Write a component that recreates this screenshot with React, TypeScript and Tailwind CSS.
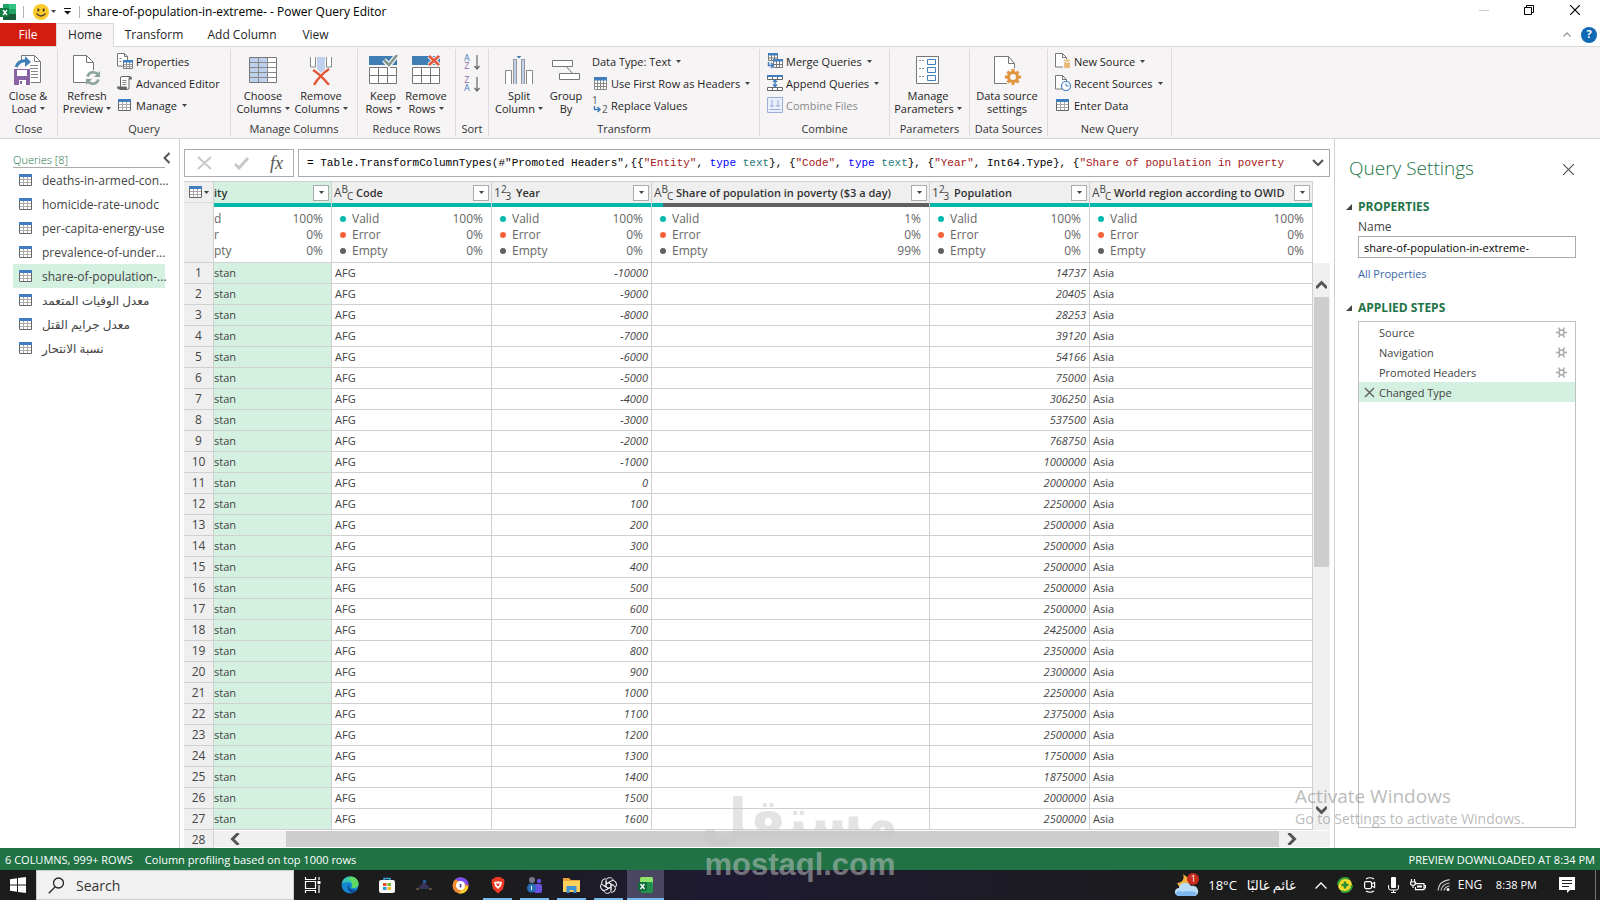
import type { ReactNode } from "react";

type ColumnType = "text" | "number";

type Column = {
  id: string;
  title: string;
  type: ColumnType;
  width: string;
  valid: number;
  empty: number;
  scrolled?: boolean;
};

// The first column is scrolled half out of view, so it only shows the tail of its texts.
const COLUMNS: Column[] = [
  { id: "entity", title: "ity", type: "text", width: "w-[118px]", valid: 100, empty: 0, scrolled: true },
  { id: "code", title: "Code", type: "text", width: "w-40", valid: 100, empty: 0 },
  { id: "year", title: "Year", type: "number", width: "w-40", valid: 100, empty: 0 },
  { id: "share", title: "Share of population in poverty ($3 a day)", type: "text", width: "w-[278px]", valid: 1, empty: 99 },
  { id: "population", title: "Population", type: "number", width: "w-40", valid: 100, empty: 0 },
  { id: "region", title: "World region according to OWID", type: "text", width: "", valid: 100, empty: 0 },
];

const ROWS: Array<[number, number]> = [
  [-10000, 14737],
  [-9000, 20405],
  [-8000, 28253],
  [-7000, 39120],
  [-6000, 54166],
  [-5000, 75000],
  [-4000, 306250],
  [-3000, 537500],
  [-2000, 768750],
  [-1000, 1000000],
  [0, 2000000],
  [100, 2250000],
  [200, 2500000],
  [300, 2500000],
  [400, 2500000],
  [500, 2500000],
  [600, 2500000],
  [700, 2425000],
  [800, 2350000],
  [900, 2300000],
  [1000, 2250000],
  [1100, 2375000],
  [1200, 2500000],
  [1300, 1750000],
  [1400, 1875000],
  [1500, 2000000],
  [1600, 2500000],
];

const QUERIES = [
  "deaths-in-armed-con...",
  "homicide-rate-unodc",
  "per-capita-energy-use",
  "prevalence-of-under...",
  "share-of-population-...",
  "معدل الوفيات المتعمد",
  "معدل جرايم القتل",
  "نسبة الانتحار",
];

const STEPS = ["Source", "Navigation", "Promoted Headers", "Changed Type"];

const UI_FONT = "font-['Open_Sans','Noto_Sans','DejaVu_Sans',sans-serif]";
const CELL = "h-[21px] border-b border-r border-[#d0d0d0] px-[3px] pb-[2px] pt-0";

export default function App() {
  return (
    <div className={`relative flex h-screen w-full flex-col overflow-hidden bg-white text-[11px] leading-[13px] text-[#1e1e1e] ${UI_FONT}`}>
      <TitleBar />
      <Tabs />
      <Ribbon />
      <main className="flex min-h-0 flex-1">
        <QueriesPane />
        <section className="flex min-w-0 flex-1 flex-col pl-1 pr-1 pt-2.5">
          <FormulaBar />
          <DataGrid />
        </section>
        <SettingsPane />
      </main>
      <footer className="flex h-[22px] shrink-0 items-center bg-[#217346] px-[5px] text-white">
        <span>6 COLUMNS, 999+ ROWS</span>
        <span className="ml-3">Column profiling based on top 1000 rows</span>
        <span className="ml-auto">PREVIEW DOWNLOADED AT 8:34 PM</span>
      </footer>
      <Taskbar />
      <Watermarks />
    </div>
  );
}

function TitleBar() {
  return (
    <header className="flex h-[23px] shrink-0 items-center text-xs text-black">
      <ExcelLogo />
      <span className="ml-[7px] h-3 w-px bg-[#b5b5b5]" />
      <button type="button" aria-label="Send a smile" className="ml-[9px] flex items-center gap-[2px]">
        <svg width="16" height="16" viewBox="0 0 16 16">
          <circle cx="8" cy="8" r="8" fill="#fcc92b" />
          <ellipse cx="5.3" cy="6" rx="1.1" ry="1.7" fill="#4b4130" />
          <ellipse cx="10.7" cy="6" rx="1.1" ry="1.7" fill="#4b4130" />
          <path d="M3.5 9.5q4.500 5 9 0" fill="none" stroke="#4b4130" strokeWidth="1.300" />
        </svg>
        <Caret />
      </button>
      <button type="button" aria-label="Customize toolbar" className="ml-2">
        <svg width="7" height="7" viewBox="0 0 7 7">
          <path d="M0 .5h7" stroke="#111" />
          <path d="M0 3h7L3.500 6.500z" fill="#111" />
        </svg>
      </button>
      <span className="ml-2 h-3 w-px bg-[#b5b5b5]" />
      <h1 className="ml-[7px]">share-of-population-in-extreme- - Power Query Editor</h1>
      <div className="ml-auto flex items-center pb-[3px] pr-5">
        <button type="button" aria-label="Minimize" className="mr-[35px]">
          <svg width="10" height="10"><path d="M0 5.500h10" stroke="#ccc" /></svg>
        </button>
        <button type="button" aria-label="Restore" className="mr-9">
          <svg width="10" height="10" fill="none" stroke="#000"><path d="M.5 2.500h7v7h-7zM2.500 2.500v-2h7v7h-2" /></svg>
        </button>
        <button type="button" aria-label="Close">
          <svg width="10" height="10" stroke="#000" strokeWidth="1.200"><path d="M0 0l10 10M10 0L0 10" /></svg>
        </button>
      </div>
    </header>
  );
}

function Tabs() {
  return (
    <nav className="flex h-6 shrink-0 border-b border-[#d9d7d8] text-xs text-[#262626]">
      <button type="button" className="w-14 bg-[#d21e10] text-white">File</button>
      <button type="button" className="-mb-px w-[58px] border border-b-0 border-[#d9d7d8] bg-[#f6f4f5] pb-[2px]">Home</button>
      <button type="button" className="w-20">Transform</button>
      <button type="button" className="w-24">Add Column</button>
      <button type="button" className="w-[51px]">View</button>
      <div className="ml-auto flex items-center gap-[10px] pr-[3px]">
        <button type="button" aria-label="Collapse ribbon">
          <svg width="8" height="5" fill="none" stroke="#999" strokeWidth="1.300"><path d="M.5 4.500L4 1l3.500 3.500" /></svg>
        </button>
        <button type="button" aria-label="Help" className="flex size-4 items-center justify-center rounded-full bg-[#0f69b4] text-[11px] font-bold text-white">?</button>
      </div>
    </nav>
  );
}

function Ribbon() {
  return (
    <div className="flex h-[92px] shrink-0 overflow-hidden border-b border-[#d5d3d4] bg-[#f6f4f5] py-[2px]">
      <Group label="Close" className="w-[58px]">
        <BigButton icon={<CloseLoadIcon />} lines={["Close &", "Load"]} caret className="w-14" />
      </Group>
      <Group label="Query" className="w-[173px]">
        <BigButton icon={<RefreshIcon />} lines={["Refresh", "Preview"]} caret className="w-[58px]" />
        <SmallButtons className="pl-px">
          <SmallButton icon={<PropertiesIcon />}>Properties</SmallButton>
          <SmallButton icon={<ScrollIcon />}>Advanced Editor</SmallButton>
          <SmallButton icon={<TableIcon />} caret>Manage</SmallButton>
        </SmallButtons>
      </Group>
      <Group label="Manage Columns" className="w-[127px]">
        <BigButton icon={<ChooseColumnsIcon />} lines={["Choose", "Columns"]} caret className="ml-[3px] w-[58px]" />
        <BigButton icon={<RemoveColumnsIcon />} lines={["Remove", "Columns"]} caret className="w-[58px]" />
      </Group>
      <Group label="Reduce Rows" className="w-[98px]">
        <BigButton icon={<RowsIcon remove={false} />} lines={["Keep", "Rows"]} caret className="ml-[3px] w-11" />
        <BigButton icon={<RowsIcon remove />} lines={["Remove", "Rows"]} caret className="w-[42px]" />
      </Group>
      <Group label="Sort" className="w-[33px]">
        <div className="flex flex-col gap-[6px] pl-2 pt-[5px]">
          <SortButton top="A" bottom="Z" label="Sort ascending" />
          <SortButton top="Z" bottom="A" label="Sort descending" />
        </div>
      </Group>
      <Group label="Transform" className="w-[271px]">
        <BigButton icon={<SplitIcon />} lines={["Split", "Column"]} caret className="ml-[3px] w-[54px]" />
        <BigButton icon={<GroupByIcon />} lines={["Group", "By"]} className="w-10" />
        <SmallButtons className="pl-[6px]">
          <SmallButton caret>Data Type: Text</SmallButton>
          <SmallButton icon={<HeaderRowIcon />} caret>Use First Row as Headers</SmallButton>
          <SmallButton icon={<ReplaceIcon />}>Replace Values</SmallButton>
        </SmallButtons>
      </Group>
      <Group label="Combine" className="w-[130px]">
        <SmallButtons className="pl-[7px]">
          <SmallButton icon={<MergeIcon />} caret>Merge Queries</SmallButton>
          <SmallButton icon={<AppendIcon />} caret>Append Queries</SmallButton>
          <SmallButton icon={<CombineIcon />} disabled>Combine Files</SmallButton>
        </SmallButtons>
      </Group>
      <Group label="Parameters" className="w-20">
        <BigButton icon={<ParametersIcon />} lines={["Manage", "Parameters"]} caret className="w-[76px]" />
      </Group>
      <Group label="Data Sources" className="w-[78px]">
        <BigButton icon={<SourceSettingsIcon />} lines={["Data source", "settings"]} className="w-[74px]" />
      </Group>
      <Group label="New Query" className="w-[124px]">
        <SmallButtons className="pl-[7px]">
          <SmallButton icon={<PageIcon badge="data" />} caret>New Source</SmallButton>
          <SmallButton icon={<PageIcon badge="clock" />} caret>Recent Sources</SmallButton>
          <SmallButton icon={<TableIcon />}>Enter Data</SmallButton>
        </SmallButtons>
      </Group>
    </div>
  );
}

function Group({ label, className, children }: { label: string; className: string; children: ReactNode }) {
  return (
    <div className={`flex shrink-0 flex-col border-r border-[#dddbdc] ${className}`}>
      <div className="flex flex-1">{children}</div>
      <div className="whitespace-nowrap pb-px text-center text-[#333]">{label}</div>
    </div>
  );
}

function BigButton({ icon, lines, caret, className }: { icon: ReactNode; lines: [string, string]; caret?: boolean; className: string }) {
  return (
    <button type="button" className={`flex shrink-0 flex-col items-center pt-[6px] ${className}`}>
      {icon}
      <span className="mt-1 whitespace-nowrap">{lines[0]}</span>
      <span className="flex items-center gap-[3px] whitespace-nowrap">{lines[1]}{caret && <Caret />}</span>
    </button>
  );
}

function SmallButtons({ className, children }: { className: string; children: ReactNode }) {
  return <div className={`flex flex-col items-start pt-px ${className}`}>{children}</div>;
}

function SmallButton({ icon, caret, disabled, children }: { icon?: ReactNode; caret?: boolean; disabled?: boolean; children: ReactNode }) {
  return (
    <button type="button" disabled={disabled} className="flex h-[22px] items-center whitespace-nowrap disabled:text-[#8a8a8a]">
      {icon && <span className="mr-[3px] flex w-4 justify-center">{icon}</span>}
      {children}
      {caret && <span className="ml-[5px]"><Caret /></span>}
    </button>
  );
}

function SortButton({ top, bottom, label }: { top: string; bottom: string; label: string }) {
  const tone = (letter: string) => (letter === "A" ? "text-[#3f7fbf]" : "text-[#8f6aa8]");
  return (
    <button type="button" aria-label={label} className="flex items-center gap-1 text-[9px] leading-2">
      <span className="flex flex-col"><span className={tone(top)}>{top}</span><span className={tone(bottom)}>{bottom}</span></span>
      <svg width="6" height="15" fill="none" stroke="#666" strokeWidth="1.200"><path d="M3 0v14M.5 11L3 14l2.500-3" /></svg>
    </button>
  );
}

function QueriesPane() {
  return (
    <aside className="w-[180px] shrink-0 border-r border-[#d0d0d0] pl-[13px] pt-[13px] text-[#444]">
      <div className="flex h-4 w-[152px] items-center justify-between border-b border-[#ababab]">
        <h2 className="font-light text-[#217346]">Queries [8]</h2>
        <button type="button" aria-label="Collapse queries" className="-mr-[5px] pb-1">
          <svg width="7" height="12" fill="none" stroke="#555" strokeWidth="2"><path d="M6.500 1L1.500 6l5 5" /></svg>
        </button>
      </div>
      <ul className="w-[152px] text-xs">
        {QUERIES.map((q, i) => (
          <li key={q} className={i === 4 ? "bg-[#d3f0e0]" : ""}>
            <button type="button" className="flex h-6 w-full items-center whitespace-nowrap pl-[6px]">
              <TableIcon />
              <span className="ml-[9px] pt-[2px]">{q}</span>
            </button>
          </li>
        ))}
      </ul>
    </aside>
  );
}

function FormulaBar() {
  const str = "text-[#a31515]";
  return (
    <div className="flex h-7 shrink-0 gap-1">
      <div className="flex w-[110px] shrink-0 items-center gap-[21px] border border-[#ababab] pl-3">
        <button type="button" aria-label="Cancel">
          <svg width="16" height="14" stroke="#c8c8c8" strokeWidth="2"><path d="M1 1l13 12M14 1L1 13" /></svg>
        </button>
        <button type="button" aria-label="Accept">
          <svg width="15" height="13" fill="none" stroke="#c8c8c8" strokeWidth="3"><path d="M1 7l4 4 9-10" /></svg>
        </button>
        <button type="button" className="font-['Liberation_Serif',serif] text-[18px] italic text-[#555]">fx</button>
      </div>
      <div className="flex min-w-0 flex-1 items-center border border-[#ababab] pl-2 pr-[5px] text-black">
        <code className="min-w-0 flex-1 overflow-hidden whitespace-pre font-['Liberation_Mono',monospace]">
          {'= Table.TransformColumnTypes(#"Promoted Headers",{{'}<span className={str}>"Entity"</span>, <TypeText />{"}, {"}
          <span className={str}>"Code"</span>, <TypeText />{"}, {"}<span className={str}>"Year"</span>
          {", Int64.Type}, {"}<span className={str}>"Share of population in poverty</span>
        </code>
        <button type="button" aria-label="Expand formula bar">
          <svg width="12" height="8" fill="none" stroke="#555" strokeWidth="2"><path d="M1 1l5 5 5-5" /></svg>
        </button>
      </div>
    </div>
  );
}

function TypeText() {
  return <><span className="text-[#0000ff]">type</span> <span className="text-[#257a7a]">text</span></>;
}

function DataGrid() {
  return (
    <div className="mt-1 flex min-h-0 flex-1 flex-col">
      <div className="flex min-h-0 flex-1 overflow-hidden">
        <div className="min-w-0 flex-1 overflow-hidden">
          <table className="w-full table-fixed border-separate border-spacing-0 text-[#444]">
            <colgroup>
              <col className="w-[30px]" />
              {COLUMNS.map((c) => <col key={c.id} className={c.width} />)}
            </colgroup>
            <thead>
              <tr>
                <th className="h-[82px] border-b border-r border-t border-[#d0d0d0] bg-[#efefef] p-0 align-top">
                  <button type="button" aria-label="Table options" className="flex h-[21px] w-full items-center gap-px border-b border-[#ddd] pl-[5px]">
                    <TableIcon />
                    <Caret />
                  </button>
                </th>
                {COLUMNS.map((c) => <HeaderCell key={c.id} column={c} />)}
              </tr>
            </thead>
            <tbody>
              {ROWS.map(([year, population], i) => (
                <tr key={year}>
                  <th scope="row" className="h-[21px] border-b border-r border-[#d0d0d0] bg-[#efefef] p-0 text-center text-xs leading-4 font-normal">{i + 1}</th>
                  <td className="h-[21px] border-b border-r border-[#d0d0d0] bg-[#d3f0e0] px-0 pb-[2px] pt-0">stan</td>
                  <td className={CELL}>AFG</td>
                  <td className={`${CELL} text-right italic`}>{year}</td>
                  <td className={CELL} />
                  <td className={`${CELL} text-right italic`}>{population}</td>
                  <td className={CELL}>Asia</td>
                </tr>
              ))}
            </tbody>
          </table>
        </div>
        <div className="mt-[82px] flex w-[17px] shrink-0 flex-col items-center bg-[#f0f0f0] pb-[15px] pt-[17px]">
          <svg width="11" height="10" fill="none" stroke="#555" strokeWidth="3"><path d="M0 8l5.500-5.500L11 8" /></svg>
          <div className="mt-[7px] h-[270px] w-[15px] bg-[#cdcdcd]" />
          <svg className="mt-auto" width="11" height="10" fill="none" stroke="#555" strokeWidth="3"><path d="M0 2l5.500 5.500L11 2" /></svg>
        </div>
      </div>
      <div className="flex h-[18px] shrink-0 overflow-hidden">
        <div className="w-[30px] shrink-0 border-r border-[#d0d0d0] bg-[#efefef] pt-[2px] text-center text-xs leading-4 text-[#444]">28</div>
        <div className="flex flex-1 items-center border-y border-white bg-[#f0f0f0] pl-4">
          <svg width="10" height="12" fill="none" stroke="#555" strokeWidth="3"><path d="M8.500 0L2.500 6l6 6" /></svg>
          <div className="ml-[46px] h-full flex-1 bg-[#cdcdcd]" />
          <svg className="ml-2 mr-[33px]" width="10" height="12" fill="none" stroke="#555" strokeWidth="3"><path d="M1.500 0l6 6-6 6" /></svg>
        </div>
      </div>
    </div>
  );
}

function HeaderCell({ column }: { column: Column }) {
  const { scrolled, type, title, valid, empty } = column;
  return (
    <th className="h-[82px] overflow-hidden border-b border-r border-t border-[#d0d0d0] p-0 text-left align-top font-normal">
      <div className={`flex h-[21px] items-center ${scrolled ? "bg-[#d3f0e0]" : "bg-[#efefef]"}`}>
        {!scrolled && <TypeIcon type={type} />}
        <span className={`whitespace-nowrap pb-px font-semibold text-[#333] ${scrolled ? "" : "ml-[5px]"}`}>{title}</span>
        <button type="button" aria-label={`Filter ${title}`} className="ml-auto mr-[2px] flex size-4 shrink-0 items-center justify-center border border-[#ababab] bg-white">
          <Caret />
        </button>
      </div>
      <div className="flex h-1">
        <div className="bg-[#01b8aa]" style={{ width: valid === 100 ? "100%" : "11px" }} />
        <div className="flex-1 bg-[#5f6062]" />
      </div>
      <dl className={`flex h-[55px] flex-col justify-center pr-2 text-[#666] ${scrolled ? "" : "pl-2"}`}>
        <Stat color="bg-[#01b8aa]" name={scrolled ? "d" : "Valid"} value={valid} dot={!scrolled} />
        <Stat color="bg-[#f4623a]" name={scrolled ? "r" : "Error"} value={0} dot={!scrolled} />
        <Stat color="bg-[#5f6062]" name={scrolled ? "pty" : "Empty"} value={empty} dot={!scrolled} />
      </dl>
    </th>
  );
}

function Stat({ color, name, value, dot }: { color: string; name: string; value: number; dot: boolean }) {
  return (
    <div className="flex h-4 items-center text-xs">
      {dot && <span className={`mr-[6px] size-[6px] rounded-full ${color}`} />}
      <dt>{name}</dt>
      <dd className="ml-auto">{value}%</dd>
    </div>
  );
}

function TypeIcon({ type }: { type: ColumnType }) {
  const [a, b, c] = type === "text" ? ["A", "B", "C"] : ["1", "2", "3"];
  return (
    <span aria-hidden="true" className="flex w-[19px] shrink-0 items-center pl-[2px] leading-3 text-[#444]">
      <span className="text-[12px]">{a}</span>
      <span className="pb-2 text-[10px]">{b}</span>
      <span className="-ml-px pt-[6px] text-[10px]">{c}</span>
    </span>
  );
}

function SettingsPane() {
  return (
    <aside className="flex w-[266px] shrink-0 flex-col border-l border-[#d0d0d0] pb-5 pl-[11px] pr-6 text-xs leading-4 text-[#444]">
      <div className="mt-4 flex h-7 items-center justify-between pl-[3px]">
        <h2 className="pb-[2px] text-[19px] font-light leading-[26px] text-[#217346]">Query Settings</h2>
        <button type="button" aria-label="Close settings" className="mr-[2px]">
          <svg width="11" height="11" stroke="#555" strokeWidth="1.200"><path d="M0 0l11 11M11 0L0 11" /></svg>
        </button>
      </div>
      <SectionTitle className="mt-4">PROPERTIES</SectionTitle>
      <label htmlFor="query-name" className="ml-3 mt-1">Name</label>
      <input id="query-name" defaultValue="share-of-population-in-extreme-" className="ml-3 mt-px h-[22px] border border-[#ababab] px-[5px] text-[11px] text-black" />
      <a href="#properties" className="ml-3 mt-2 self-start text-[11px] text-[#3b6aa8]">All Properties</a>
      <SectionTitle className="mt-[18px]">APPLIED STEPS</SectionTitle>
      <ul className="ml-3 mt-[5px] min-h-0 flex-1 border border-[#c0c0c0] text-[11px]">
        {STEPS.map((step, i) => (
          <li key={step} className={`flex h-5 items-center pl-[5px] pr-2 ${i === 3 ? "bg-[#d3f0e0]" : ""}`}>
            <span className="w-[15px]">
              {i === 3 && <svg width="11" height="11" stroke="#666" strokeWidth="1.500"><path d="M1 1l9 9M10 1L1 10" /></svg>}
            </span>
            <span className="pt-[2px]">{step}</span>
            {i < 3 && <button type="button" aria-label={`Edit ${step}`} className="ml-auto"><StepGear /></button>}
          </li>
        ))}
      </ul>
    </aside>
  );
}

function SectionTitle({ className, children }: { className: string; children: ReactNode }) {
  return (
    <h3 className={`flex h-4 items-center font-bold text-[#217346] ${className}`}>
      <svg className="mr-[6px]" width="6" height="6"><path d="M6 0v6H0z" fill="#444" /></svg>
      {children}
    </h3>
  );
}

function Taskbar() {
  return (
    <div className="flex h-[30px] shrink-0 items-stretch bg-linear-to-r from-[#1c1c1c] from-30% via-[#1f1a33] via-45% to-[#1c1c1c] to-75% text-sm text-white">
      <button type="button" aria-label="Start" className="flex w-9 items-center justify-center">
        <svg width="16" height="16" fill="#fff"><path d="M0 2.200l7-1v6.300H0zM8 1l8-1v7.500H8zM0 8.500h7v6.300l-7-1zM8 8.500h8V16l-8-1z" /></svg>
      </button>
      <label className="flex w-[258px] items-center border border-[#cfcfcf] bg-[#f1f1f1] pl-[11px]">
        <svg width="17" height="17" fill="none" stroke="#222" strokeWidth="1.300"><circle cx="10.500" cy="6" r="5" /><path d="M7 10L.8 16.200" /></svg>
        <input type="text" placeholder="Search" aria-label="Search" className="ml-[11px] w-40 bg-transparent pt-px placeholder:text-[#333]" />
      </label>
      <div className="flex">
        <TaskButton label="Task view">
          <svg width="17" height="16" fill="none" stroke="#fff" strokeWidth="1.200"><path d="M1.500 4.500h10v7h-10zM1.500 0v2.500h10V0M1.500 16v-2.500h10V16M15 0v3M15 8v8" /><path d="M13.500 4h3v3h-3z" fill="#fff" stroke="none" /></svg>
        </TaskButton>
        <TaskButton label="Edge">
          <svg width="18" height="18" viewBox="0 0 18 18">
            <circle cx="9" cy="9" r="8.500" fill="#1387d0" />
            <path d="M1 7C2 2 6 .5 9.500.5c5 0 8 4 8 7.500 0 3-3 4-5 4-2.500 0-2-1-1.500-2 .5-3-2-4-4-4-3 0-5 1-6 1z" fill="#35c8b0" />
            <path d="M10 .5c5 0 7.500 4 7.500 7.500 0 3-3 4-5 4-2.500 0-2-1-1.500-2C12 6 10 4 7 3z" fill="#5fd865" />
            <path d="M7.500 8c-2 3-1 8 4 9 2-.5 4-2 5-3.500-4 1.500-9 0-9-5.500z" fill="#0c4f96" />
          </svg>
        </TaskButton>
        <TaskButton label="Store">
          <svg width="16" height="17" viewBox="0 0 16 17">
            <path d="M5 4V1.500h6V4" fill="none" stroke="#35a7dd" strokeWidth="1.500" />
            <rect y="3" width="16" height="13" rx="2" fill="#f7f7f7" />
            <path d="M4 6h3.500v3H4z" fill="#e8502d" /><path d="M8.500 6H12v3H8.500z" fill="#75b72a" />
            <path d="M4 10h3.500v3H4z" fill="#2997d6" /><path d="M8.500 10H12v3H8.500z" fill="#f5b81e" />
          </svg>
        </TaskButton>
        <TaskButton label="Game">
          <svg width="18" height="16" viewBox="0 0 18 16"><path d="M2 12l5-5 1.500-2L11 7l5 5H2z" fill="#38345a" /><path d="M8 3h3v3H8z" fill="#225d96" /><path d="M1 12h3M14 12h3" stroke="#92764f" /></svg>
        </TaskButton>
        <TaskButton label="Secure browser">
          <svg width="17" height="17" viewBox="0 0 17 17"><circle cx="8.500" cy="8.500" r="8" fill="#f18a30" /><path d="M3 2.500a8 8 0 0 1 13.500 6.500L12 6z" fill="#7e4ef0" /><path d="M16.500 9a8 8 0 0 1-10 7.200L12 10z" fill="#f8cf31" /><circle cx="8.500" cy="8.500" r="4.500" fill="#fff" /><path d="M8.500 7v3.500" stroke="#5039a0" strokeWidth="1.600" /></svg>
        </TaskButton>
        <TaskButton label="Brave" running>
          <svg width="14" height="17" viewBox="0 0 14 17"><path d="M3 1.500L4.500 0h5L11 1.500l2 .5.500 3-1.500 7-5 4.500L2 12 .5 5 1 2z" fill="#ee3a24" /><path d="M3 5l3-.5h2l3 .5-1 4-3 3-3-3z" fill="#fff" /><path d="M5 6l2 1 2-1-1 3H6z" fill="#ee3a24" /></svg>
        </TaskButton>
        <TaskButton label="Teams" running>
          <svg width="16" height="17" viewBox="0 0 16 17"><circle cx="5" cy="3" r="3" fill="#77788d" /><circle cx="12" cy="4" r="2.200" fill="#6b4ee0" /><rect x="7" y="7" width="8" height="9" rx="2" fill="#6952df" /><circle cx="4.500" cy="11" r="4.500" fill="#276fb4" /><path d="M4.500 9v4" stroke="#fff" /></svg>
        </TaskButton>
        <TaskButton label="File Explorer" running>
          <svg width="17" height="15" viewBox="0 0 17 15"><path d="M0 0h6l2 2h9v5H0z" fill="#e9a23b" /><path d="M0 3h17v11H0z" fill="#fdd05b" /><path d="M3.500 15V8h10v7h-3v-3h-4v3z" fill="#3d91d6" /></svg>
        </TaskButton>
        <TaskButton label="ChatGPT" running>
          <svg width="17" height="17" viewBox="-8.500 -8.500 17 17" fill="none" stroke="#eee" strokeWidth="1">
            {[0, 60, 120, 180, 240, 300].map((a) => (
              <path key={a} transform={`rotate(${a})`} d="M-2.500 1.400V-4.500C-2.500-8.500 3.500-9 4.700-5.400M-2.500-1.400L2.600-4.400" />
            ))}
          </svg>
        </TaskButton>
        <TaskButton label="Excel" running active>
          <svg width="16" height="17" viewBox="0 0 16 17"><rect x="2" width="13" height="8" rx="1.500" fill="#8fe36b" /><rect x="3" y="5" width="12" height="11" rx="1.500" fill="#23914c" /><rect y="5" width="9" height="9" rx="1" fill="#116b3a" /><path d="M2.500 7l4 5M6.500 7l-4 5" stroke="#fff" strokeWidth="1.300" /></svg>
        </TaskButton>
      </div>
      <div className="ml-auto flex items-center whitespace-nowrap text-[13px]">
        <span className="relative">
          <svg width="26" height="24" viewBox="0 0 26 24"><path d="M9 1c2 5-1 9-6 9l3 5h8l3-8z" fill="#f2b13d" /><path d="M5 23c-6-1-5-8 0-8 1-6 9-7 12-2 7-2 10 8 4 10z" fill="#b9dcf7" /><path d="M2 20c3-3 5-1 7-1s6-2 14 1c-1 2-2 3-4 3H5c-2 0-3-1-3-3z" fill="#7db8ef" /></svg>
          <span className="absolute left-[13px] top-0 size-3 rounded-full bg-[#c52a1c] text-center text-[9px] leading-3">1</span>
        </span>
        <span className="ml-2">18°C</span>
        <span dir="rtl" className="ml-[10px]">غائم غالبًا</span>
        <svg className="ml-[19px]" width="12" height="7" fill="none" stroke="#fff" strokeWidth="1.300"><path d="M.5 6.500L6 1l5.500 5.500" /></svg>
        <svg className="ml-[10px]" width="16" height="16" viewBox="0 0 16 16"><circle cx="8" cy="8" r="7" fill="#f5dc2e" stroke="#38a13a" strokeWidth="2" strokeDasharray="15 7" /><path d="M8 4.500v7M4.500 8h7" stroke="#258b37" strokeWidth="2.500" /></svg>
        <svg className="ml-[11px]" width="12" height="16" fill="none" stroke="#fff" strokeWidth="1.200"><rect x=".6" y="4.600" width="7" height="7" rx="1.500" /><path d="M7.600 7l3-1.500v5L7.600 9M2 2q4-2.500 8 0M2 14q4 2.500 8 0" /></svg>
        <svg className="ml-3" width="11" height="16"><rect x="3" width="5" height="11" rx="1" fill="#fff" /><path d="M.6 8v3q0 2 2 2h5.800q2 0 2-2V8M5.500 13v3M3 15.500h5" fill="none" stroke="#fff" /></svg>
        <svg className="ml-[11px]" width="16" height="12" fill="none" stroke="#fff" strokeWidth="1.200"><path d="M4.500 4.600H14v6H5.500V8M14 6.500h1.500v2.500H14M1.500 0v3M4.500 0v3M.5 3h5v2q-2.500 3-5 0zM3 6v3" /><path d="M7 6.500h5v2H7z" fill="#fff" stroke="none" /></svg>
        <svg className="ml-[11px]" width="13" height="12" fill="none" stroke="#ccc" strokeWidth="1.200"><path d="M1 11.500Q2 2 12.500.6M4 11.500Q5 5 12.500 4M7 11.500q1-4 5.500-4.500" /><circle cx="11" cy="10.500" r="1.500" fill="#fff" stroke="none" /></svg>
        <span className="ml-2 w-[26px] text-xs">ENG</span>
        <span className="ml-3 text-[11px]">8:38 PM</span>
        <svg className="ml-[22px]" width="16" height="16"><path d="M0 0h16v13h-5l-3 3v-3H0z" fill="#fff" /><path d="M3 3.500h10M3 6.500h10M3 9.500h7" stroke="#222" /></svg>
        <span className="ml-5 mr-1 h-[30px] w-px bg-[#777]" />
      </div>
    </div>
  );
}

function TaskButton({ label, running, active, children }: { label: string; running?: boolean; active?: boolean; children: ReactNode }) {
  return (
    <button type="button" aria-label={label} className={`relative flex w-[37px] items-center justify-center ${active ? "bg-[#4a4560]" : ""}`}>
      {children}
      {running && <span className={`absolute bottom-0 h-0.5 bg-[#76b9ed] ${active ? "inset-x-0" : "inset-x-1"}`} />}
    </button>
  );
}

function Watermarks() {
  return (
    <>
      <div className="pointer-events-none absolute bottom-[19px] left-1/2 ml-[-98px] w-[196px] text-center font-bold text-[#c8c8c8]/50">
        <div dir="rtl" className="whitespace-nowrap font-['DejaVu_Sans',sans-serif] text-[54px] leading-[60px]">مستقل</div>
        <div className="font-['Liberation_Sans',sans-serif] text-[31px] leading-8">mostaql.com</div>
      </div>
      <div className="pointer-events-none absolute bottom-[71px] right-[69px] w-[236px] whitespace-nowrap text-[#8c8c8c]/60">
        <div className="text-[19px] leading-[26px]">Activate Windows</div>
        <div className="text-sm leading-5">Go to Settings to activate Windows.</div>
      </div>
    </>
  );
}

function Caret() {
  return <svg className="shrink-0" width="5" height="3"><path d="M0 0h5L2.500 3z" fill="#444" /></svg>;
}

function ExcelLogo() {
  return (
    <svg width="16" height="16" viewBox="0 0 16 16">
      <path d="M3 0h13v16H3z" fill="#21a366" /><path d="M9 0h7v5H9z" fill="#33c481" /><path d="M3 10h13v6H3z" fill="#185c37" />
      <path d="M0 4h9v9H0z" fill="#107c41" /><path d="M3 6l4 5M7 6l-4 5" stroke="#fff" strokeWidth="1.400" />
    </svg>
  );
}

function TableIcon() {
  return (
    <svg className="mr-px shrink-0" width="13" height="12">
      <path d="M.5.5h12v11H.5z" fill="#fff" stroke="#666" /><path d="M4.500 3v8M8.500 3v8M1 5.500h11M1 8.500h11" stroke="#aaa" />
      <path d="M0 0h13v3H0z" fill="#3f7fbf" />
    </svg>
  );
}

function CloseLoadIcon() {
  return (
    <svg width="28" height="30" fill="none">
      <path d="M7.500 8V.5h13l6 6v21H17" fill="#fff" stroke="#777" /><path d="M20.500.5v6h6M16 10.500h8M16 13.500h8M17 16.500h7M17 19.500h7M17 22.500h7" stroke="#888" />
      <path d="M2 12Q5 5 12 6" stroke="#3f7fb5" strokeWidth="3" /><path d="M11 1l6 6-6 5z" fill="#3f7fb5" />
      <path d="M0 14h16v16H0z" fill="#8a63a5" /><path d="M3 15h10v6H3zM5 25h7v5H5z" fill="#fff" /><path d="M6 26h2v3H6z" fill="#8a63a5" />
    </svg>
  );
}

function RefreshIcon() {
  return (
    <svg width="28" height="30" fill="none">
      <path d="M.5.5h13l7 7v20H.5z" fill="#fff" stroke="#777" /><path d="M13.500.5v7h7" stroke="#777" />
      <circle cx="20" cy="23" r="8" fill="#f6f4f5" />
      <path d="M14.500 21.500q2-5 7-4 3 .5 4 3M25.500 24.500q-2 5-7 4-3-.5-4-3" stroke="#8ba39a" strokeWidth="2.500" />
      <path d="M27 16v6h-6zM13 30v-6h6z" fill="#8ba39a" />
    </svg>
  );
}

function PropertiesIcon() {
  return (
    <svg width="16" height="16" fill="none">
      <path d="M.5.5h7l3 3v9.500H.5z" fill="#fff" stroke="#777" /><path d="M2.500 5.500h2M2.500 8.500h2M7.500.5v3h3" stroke="#777" />
      <path d="M6.500 7.500h9v8h-9z" fill="#fff" stroke="#777" /><path d="M9.500 9v6M12.500 9v6M7 11.500h8M7 13.500h8" stroke="#999" /><path d="M6 7h10v2.500H6z" fill="#3f7fbf" />
    </svg>
  );
}

function ScrollIcon() {
  return (
    <svg width="16" height="14" fill="none">
      <path d="M3.500 11V2q0-1.500 1.500-1.500h8q-1 1-1 2.500v9q0 1.500-1.500 1.500H3" fill="#fff" stroke="#666" />
      <path d="M5.500 4.500h4M5.500 6.500h4M5.500 8.500h4" stroke="#888" /><path d="M0 10.500h9.500l1 3H2q-2 0-2-3zM13 .5q2 0 2 3h-3q0-2 1-3z" fill="#666" />
    </svg>
  );
}

function ChooseColumnsIcon() {
  return (
    <svg width="28" height="30">
      <path d="M.5 2.500h27v25H.5z" fill="#fff" stroke="#777" /><path d="M1 3h17v24H1z" fill="#bdd0ee" />
      <path d="M9.500 3v24M18.500 3v24M1 7.500h26M1 12.500h26M1 17.500h26M1 22.500h26" stroke="#888" />
    </svg>
  );
}

function RemoveColumnsIcon() {
  return (
    <svg width="24" height="30" fill="none">
      <path d="M1.500 2v10h5V2M17.500 2v10h5V2" fill="#fff" stroke="#888" /><path d="M8 2h8v12l-4 4-4-4z" fill="#bdd0ee" />
      <path d="M4 15q7 4 16 15M20 14Q11 20 5 30" stroke="#e2593a" strokeWidth="2.500" />
    </svg>
  );
}

function RowsIcon({ remove }: { remove: boolean }) {
  return (
    <svg width="30" height="30" fill="none">
      <path d="M1 1h28v9H1z" fill="#3f7fb5" /><path d="M1.500 12.500h27v16h-27zM10.500 12.500v16M19.500 12.500v16M1 20.500h28" fill="#fff" stroke="#777" />
      {remove ? (
        <><path d="M18 1l10 9M28 1l-10 9" stroke="#f6f4f5" strokeWidth="4.500" /><path d="M18 1l10 9M28 1l-10 9" stroke="#e2593a" strokeWidth="2.500" /></>
      ) : (
        <><path d="M16 5l5 5 8-10" stroke="#f6f4f5" strokeWidth="5" /><path d="M16 5l5 5 8-10" stroke="#7f968d" strokeWidth="2.500" /></>
      )}
    </svg>
  );
}

function SplitIcon() {
  return (
    <svg width="28" height="30" fill="none">
      <path d="M.5 29V15.500h6V29M21.500 29V15.500h6V29" fill="#fff" stroke="#888" />
      <path d="M8 4h12v25H8z" fill="#bdd0ee" /><path d="M12 4h4v25h-4z" fill="#f6f4f5" /><path d="M8.500 29V4.500h3V29M16.500 29V4.500h3V29" stroke="#999" />
      <path d="M11.500 1h5L14 3.500z" fill="#3f7fb5" />
    </svg>
  );
}

function GroupByIcon() {
  return (
    <svg width="28" height="30"><path d="M13 10l8 9" stroke="#777" /><path d="M.5 5.500h20v6H.5zM7.500 18.500h20v6h-20z" fill="#fff" stroke="#777" /></svg>
  );
}

function HeaderRowIcon() {
  return (
    <svg width="13" height="13"><path d="M.5.5h12v12H.5zM3.500 3v10M6.500 3v10M9.500 3v10M1 6.500h11M1 9.500h11" fill="#fff" stroke="#888" /><path d="M0 0h13v3.500H0z" fill="#3f7fbf" /></svg>
  );
}

function ReplaceIcon() {
  return (
    <svg className="overflow-visible" width="16" height="16" fontSize="10" fill="#555">
      <text x="0" y="7">1</text><text x="10" y="16">2</text>
      <path d="M2.500 9v3.500H8M5.500 10l2.500 2.500L5.500 15" fill="none" stroke="#3f7fbf" strokeWidth="1.500" />
    </svg>
  );
}

function MergeIcon() {
  return (
    <svg width="16" height="16" fill="none">
      <path d="M1.500.5h9v7h-9zM4.500 2v6M7.500 2v6M2 5h8" fill="#fff" stroke="#777" /><path d="M1 0h10v2.500H1z" fill="#3f7fbf" />
      <path d="M6.500 6.500h9v8h-9zM9.500 8v6M12.500 8v6M7 11.500h8" fill="#fff" stroke="#777" /><path d="M6 6h10v2.500H6z" fill="#3f7fbf" />
      <path d="M1.500 9v3.500H6M4 10l2.500 2.500L4 15" stroke="#3f7fbf" strokeWidth="1.500" />
    </svg>
  );
}

function AppendIcon() {
  return (
    <svg width="16" height="16" fill="none">
      <path d="M.5.5h15v4H.5zM.5 12.500h15v3H.5zM5.500 2v2.500M10.500 2v2.500M5.500 12.500v3M10.500 12.500v3" fill="#fff" stroke="#666" /><path d="M0 0h16v2H0z" fill="#3f7fbf" />
      <path d="M8 5v7M6 7l2-2 2 2M6 9.500l2 2 2-2" stroke="#3f7fbf" strokeWidth="1.400" />
    </svg>
  );
}

function CombineIcon() {
  return (
    <svg width="16" height="16" fill="none" stroke="#9aaedb"><path d="M.5.500h15v15H.5z" fill="#e9eefb" /><path d="M2.500 12.500h11M5 3v7M3 8l2 2 2-2M11 3v7M9 8l2 2 2-2" /></svg>
  );
}

function ParametersIcon() {
  return (
    <svg width="24" height="30"><path d="M.5 1.500h22v27H.5z" fill="#fff" stroke="#777" /><path d="M3 5.500h6M3 13.500h6M3 21.500h6" stroke="#888" strokeDasharray="2 1" /><path d="M11.500 4.500h8v5h-8zM11.500 12.500h8v5h-8zM11.500 20.500h8v5h-8z" fill="#fff" stroke="#3f7fbf" /></svg>
  );
}

function SourceSettingsIcon() {
  return (
    <svg width="27" height="30" fill="none">
      <path d="M.5 1.500h14l6 7v20H.5z" fill="#fff" stroke="#777" /><path d="M14.500 1.500v7h6" stroke="#777" />
      <circle cx="19" cy="22" r="9" fill="#f6f4f5" /><circle cx="19" cy="22" r="4.500" stroke="#e0943f" strokeWidth="3" />
      <path d="M19 14v3M19 27v3M11 22h3M24 22h3M13.500 16.500l2 2M22.500 25.500l2 2M24.500 16.500l-2 2M13.500 27.500l2-2" stroke="#e0943f" strokeWidth="3" />
    </svg>
  );
}

function PageIcon({ badge }: { badge: "data" | "clock" }) {
  return (
    <svg width="16" height="16" fill="none">
      <path d="M.5.5h7l4 4v9.500H.5zM7.500.5v4h4" fill="#fff" stroke="#777" />
      {badge === "data" ? (
        <><path d="M8 6h8v10H8z" fill="#f6f4f5" /><path d="M9 7q3-1.500 6 0v7.500q-3 1.500-6 0z" fill="#e8bd7c" /><path d="M9 8.500q3 1.500 6 0" stroke="#fff" /></>
      ) : (
        <><circle cx="11" cy="11" r="4.500" fill="#fff" stroke="#3f7fbf" strokeWidth="1.200" /><path d="M11 8.500V11h2.500" stroke="#3f7fbf" /></>
      )}
    </svg>
  );
}

function StepGear() {
  return (
    <svg width="11" height="11" fill="none" stroke="#aaa" strokeWidth="1.500"><circle cx="5.500" cy="5.500" r="2.500" /><path d="M0 5.500h3M8 5.500h3M2.500.5l1.500 3M8.500.5L7 3.500M2.500 10.500L4 7.500M8.500 10.500L7 7.500" /></svg>
  );
}
